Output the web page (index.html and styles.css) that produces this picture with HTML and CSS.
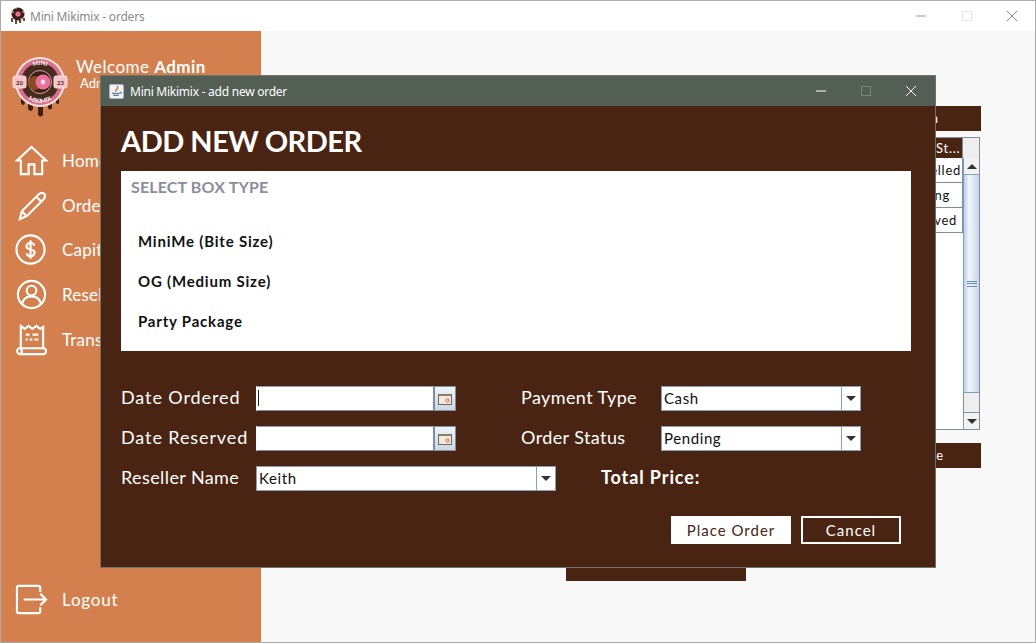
FILE: index.html
```html
<!DOCTYPE html>
<html>
<head>
  <title>Mini Mikimix - orders</title>
  <link rel="stylesheet" href="styles.css">
</head>
<body>
  <div class="window">
    <div class="titlebar">
      <svg class="app-icon" width="16" height="18" viewBox="0 0 16 18">
        <circle cx="8" cy="7" r="6.5" fill="#3f1d12"/>
        <circle cx="8" cy="7" r="2.6" fill="#e4709a"/>
        <path d="M1 5h3M12 5h3M5 1h2M10 12h2" stroke="#f4d6d6"/>
        <path d="M2 11v4M6 12v5M10 12v4M14 11v3" stroke="#3f1d12" stroke-width="1.6"/>
      </svg>
      <span class="title-text">Mini Mikimix - orders</span>
      <div class="win-controls">
        <svg width="12" height="12" viewBox="0 0 12 12"><path d="M1 6h10" stroke="#999"/></svg>
        <svg width="12" height="12" viewBox="0 0 12 12"><rect x="1.5" y="1.5" width="9" height="9" fill="none" stroke="#e6e6e6"/></svg>
        <svg width="12" height="12" viewBox="0 0 12 12"><path d="M1 1l10 10M11 1L1 11" stroke="#888"/></svg>
      </div>
    </div>
    <div class="app">
      <aside class="sidebar">
        <div class="profile">
          <svg class="logo" width="56" height="62" viewBox="0 0 56 62">
            <defs>
              <path id="arc-top" d="M11 27a17 17 0 0 1 34 0"/>
              <path id="arc-bottom" d="M7 27a21 21 0 0 0 42 0"/>
            </defs>
            <path d="M9 38v10q2 4 4 0v-4l3 2v8q3 4 5 0v-6l5 1v11q3 3 5 0V48l5-1v6q2 3 4 0v-7l4-3v5q2 2 3 0V36z" fill="#3f2015"/>
            <circle cx="28" cy="27" r="25" fill="#fbe3dc"/>
            <circle cx="28" cy="27" r="23" fill="#d86f90"/>
            <circle cx="28" cy="27" r="19" fill="#4a2a1e"/>
            <circle cx="28" cy="27" r="11.500" fill="#3a1f15" stroke="#f3cfc6" stroke-width=".8"/>
            <circle cx="23" cy="28" r="7" fill="#8a4a22"/>
            <circle cx="31" cy="27" r="7.500" fill="#ec6f9d"/>
            <circle cx="31" cy="27" r="2.400" fill="#fbe3dc"/>
            <rect x="1" y="21" width="13" height="12" rx="2" fill="#f6c4cc" stroke="#fbe3dc"/>
            <rect x="42" y="21" width="13" height="12" rx="2" fill="#f6c4cc" stroke="#fbe3dc"/>
            <text x="7.500" y="29.500" class="logo-num">20</text>
            <text x="48.500" y="29.500" class="logo-num">23</text>
            <text class="logo-word"><textPath href="#arc-top" startOffset="50%">MINI</textPath></text>
            <text class="logo-word"><textPath href="#arc-bottom" startOffset="50%" side="left">MIKIMIX</textPath></text>
          </svg>
          <div class="welcome">
            <div class="welcome-line">Welcome <b>Admin</b></div>
            <div class="role">Admin</div>
          </div>
        </div>
        <nav class="nav">
          <a class="nav-item">
            <svg class="nav-icon" viewBox="0 0 34 34"><path d="M2 17L17 3l15 14h-4v14h-8V21h-6v10H6V17z"/></svg>
            <span>Home</span>
          </a>
          <a class="nav-item">
            <svg class="nav-icon" viewBox="0 0 34 34"><path d="M5 31l2-8L25 5q3-2 5 0t0 5L12 28zM7 23l5 5M22 8l5 5"/></svg>
            <span>Orders</span>
          </a>
          <a class="nav-item">
            <svg class="nav-icon" viewBox="0 0 34 34"><circle cx="16" cy="17" r="14.500"/><path d="M20 13q-1-3-4-3t-4 3 4 4 4 4-4 3-4-3M16 7.500v19"/></svg>
            <span>Capital</span>
          </a>
          <a class="nav-item">
            <svg class="nav-icon" viewBox="0 0 34 34"><circle cx="17" cy="17" r="14"/><circle cx="17" cy="13" r="5"/><path d="M7 27q2-8 10-8t10 8"/></svg>
            <span>Resellers</span>
          </a>
          <a class="nav-item">
            <svg class="nav-icon" viewBox="0 0 34 34"><path d="M6 26V3l4 3 4-3 4 3 4-3 4 3 3-2v22M6 26H4q-2 2-2 3t2 3h26q2-1 2-3t-2-3H6zM6 26q2 3 0 6M11 12h4M18 12h6M11 17h2M15 17h3M20 17h4"/></svg>
            <span>Transactions</span>
          </a>
        </nav>
        <a class="nav-item logout">
          <svg class="nav-icon" viewBox="0 0 34 34"><path d="M26 9V5q0-2-2-2H4Q2 3 2 5v24q0 2 2 2h20q2 0 2-2v-4M9 17h23M26 11l6 6-6 6"/></svg>
          <span>Logout</span>
        </a>
      </aside>
      <main class="content">
        <h2 class="list-title">CURRENT ORDER LIST</h2>
        <div class="filter-bar">Action</div>
        <div class="table-box">
          <div class="table-rows">
            <div class="th">OrderSt...</div>
            <div class="td">Cancelled</div>
            <div class="td">Pending</div>
            <div class="td">Reserved</div>
          </div>
          <div class="scrollbar">
            <div class="sb-corner"></div>
            <div class="sb-btn"><i class="tri up"></i></div>
            <div class="sb-thumb"><i class="grip"></i></div>
            <div class="sb-track"></div>
            <div class="sb-btn"><i class="tri"></i></div>
          </div>
        </div>
        <div class="action-bar">Update</div>
        <div class="bottom-btn"></div>
      </main>
    </div>
  </div>

  <div class="dialog">
    <div class="dialog-title">
      <svg width="15" height="15" viewBox="0 0 15 15">
        <rect x=".5" y=".5" width="14" height="14" rx="1.500" fill="#eef2f7" stroke="#a9b6c6"/>
        <path d="M8 2q2 2-1 4-1 1 0 2" fill="none" stroke="#d8622a" stroke-width="1.200"/>
        <path d="M3 9q4 1.500 8 0M4 11q3 1 6 0M11 8q2 0 1 2" fill="none" stroke="#47688f"/>
      </svg>
      <span>Mini Mikimix - add new order</span>
      <div class="win-controls dark">
        <svg width="12" height="12" viewBox="0 0 12 12"><path d="M1 6h10" stroke="#fff"/></svg>
        <svg width="12" height="12" viewBox="0 0 12 12"><rect x="1.500" y="1.500" width="9" height="9" fill="none" stroke="#7a847b"/></svg>
        <svg width="12" height="12" viewBox="0 0 12 12"><path d="M1 1l10 10M11 1L1 11" stroke="#fff"/></svg>
      </div>
    </div>
    <div class="dialog-body">
      <h1>ADD NEW ORDER</h1>
      <section class="box-panel">
        <h3>SELECT BOX TYPE</h3>
        <ul class="box-list">
          <li>MiniMe (Bite Size)</li>
          <li>OG (Medium Size)</li>
          <li>Party Package</li>
        </ul>
      </section>
      <div class="form-grid">
        <div class="form-col">
          <div class="field">
            <label class="date-label">Date Ordered</label>
            <div class="input date focused"></div>
            <button class="cal-btn"><svg width="14" height="12" viewBox="0 0 14 12"><rect x=".5" y="1.500" width="13" height="10" fill="#f2ead8" stroke="#6f6a5c"/><rect x="1" y="1" width="12" height="2" fill="#8a7f68"/><circle cx="9.500" cy="7.500" r="1.600" fill="none" stroke="#d9534f"/></svg></button>
          </div>
          <div class="field">
            <label class="date-label">Date Reserved</label>
            <div class="input date"></div>
            <button class="cal-btn"><svg width="14" height="12" viewBox="0 0 14 12"><rect x=".5" y="1.500" width="13" height="10" fill="#f2ead8" stroke="#6f6a5c"/><rect x="1" y="1" width="12" height="2" fill="#8a7f68"/><circle cx="9.500" cy="7.500" r="1.600" fill="none" stroke="#d9534f"/></svg></button>
          </div>
          <div class="field">
            <label>Reseller Name</label>
            <div class="combo wide"><span>Keith</span><i class="arrow"><i class="tri"></i></i></div>
          </div>
        </div>
        <div class="form-col right">
          <div class="field">
            <label>Payment Type</label>
            <div class="combo"><span>Cash</span><i class="arrow"><i class="tri"></i></i></div>
          </div>
          <div class="field">
            <label>Order Status</label>
            <div class="combo"><span>Pending</span><i class="arrow"><i class="tri"></i></i></div>
          </div>
          <div class="field total">Total Price:</div>
        </div>
      </div>
      <div class="dialog-actions">
        <button class="btn primary">Place Order</button>
        <button class="btn">Cancel</button>
      </div>
    </div>
  </div>
</body>
</html>
```

FILE: styles.css
```css
* {
  box-sizing: border-box;
}
html, body {
  margin: 0;
  height: 100%;
  overflow: hidden;
}
body {
  font-family: "Lato", sans-serif;
  position: relative;
  width: 1036px;
  height: 643px;
}
.window {
  width: 1036px;
  height: 643px;
  border: 1px solid #ababab;
  display: flex;
  flex-direction: column;
  background: #fff;
}
.titlebar {
  height: 30px;
  display: flex;
  align-items: center;
  padding-left: 9px;
  background: #fff;
  flex: none;
}
.title-text {
  margin-left: 4px;
  font-family: "Noto Sans", sans-serif;
  font-size: 12px;
  letter-spacing: -.2px;
  color: #8a8a8a;
}
.win-controls {
  margin-left: auto;
  display: flex;
  gap: 33.500px;
  padding-right: 17px;
}
.app {
  flex: 1;
  display: flex;
  min-height: 0;
}

/* sidebar */
.sidebar {
  width: 260px;
  background: #d37f4e;
  color: #fff;
  display: flex;
  flex-direction: column;
  flex: none;
}
.profile {
  display: flex;
  padding: 24px 0 0 11px;
  height: 107px;
}
.logo-num {
  font: 700 6px "Lato", sans-serif;
  text-anchor: middle;
  fill: #5a2a1c;
}
.logo-word {
  font: 700 6px "Lato", sans-serif;
  text-anchor: middle;
  fill: #fff;
}
.welcome {
  margin-left: 8px;
  padding-top: 1px;
}
.welcome-line {
  font-size: 17px;
  line-height: 21px;
  letter-spacing: .45px;
}
.role {
  font-size: 13px;
  line-height: 12px;
  margin-left: 4px;
}
.nav {
  display: flex;
  flex-direction: column;
}
.nav-item {
  display: flex;
  align-items: center;
  height: 44.700px;
  padding-left: 14px;
  font-size: 17px;
  letter-spacing: .2px;
  white-space: nowrap;
}
.nav-icon {
  width: 33px;
  height: 33px;
  fill: none;
  stroke: #fff;
  stroke-width: 2.200;
  margin-right: 14px;
  flex: none;
}
.logout {
  margin-top: auto;
  margin-bottom: 20px;
  letter-spacing: .8px;
}

/* page behind the dialog */
.content {
  flex: 1;
  background: #f8f8f8;
  position: relative;
  padding: 40px 54px 0 45px;
}
.list-title {
  margin: 0;
  font-size: 22px;
  line-height: 26px;
  color: #111;
  letter-spacing: .8px;
}
.filter-bar {
  height: 25px;
  margin-top: 9px;
  padding-right: 43px;
  background: #4a2413;
  color: #fff;
  font-size: 13px;
  line-height: 25px;
  text-align: right;
}
.table-box {
  margin: 6px 1px 0 0;
  height: 293px;
  display: flex;
  justify-content: flex-end;
  background: #fff;
  border: 1px solid #7f8fa1;
  border-left: none;
}
.table-rows {
  width: 66px;
  display: flex;
  flex-direction: column;
  background: #fff;
}
.th {
  height: 20px;
  background: #4a2413;
  color: #fff;
  font-size: 13px;
  line-height: 20px;
  letter-spacing: .7px;
  padding-left: 2px;
  white-space: nowrap;
  overflow: hidden;
  border-right: 1px solid #7f8fa1;
}
.td {
  height: 25px;
  font-size: 13px;
  line-height: 25px;
  letter-spacing: .7px;
  color: #111;
  padding-left: 2px;
  border-right: 1px solid #7f8fa1;
  border-bottom: 1px solid #7f8fa1;
}
.scrollbar {
  width: 16px;
  display: flex;
  flex-direction: column;
  flex: none;
  background: #eee;
}
.sb-corner {
  height: 20px;
  background: #eee;
}
.sb-btn {
  height: 16px;
  background: #f2f2f2;
  border-left: 1px solid #7f9cc4;
  display: flex;
  align-items: center;
  justify-content: center;
}
.sb-thumb {
  flex: 1;
  background: linear-gradient(90deg, #b9cdea 0, #f4f8fc 35%, #c6d6e8 100%);
  border-left: 1px solid #7f9cc4;
  border-top: 1px solid #7f9cc4;
  border-bottom: 1px solid #7f9cc4;
  display: flex;
  align-items: center;
  justify-content: center;
}
.sb-track {
  height: 20px;
  background: #eee;
  border-left: 1px solid #7f8fa1;
  border-bottom: 1px solid #7f8fa1;
}
.grip {
  width: 10px;
  height: 6px;
  border-top: 1px solid #6b8cb8;
  border-bottom: 1px solid #6b8cb8;
  background: linear-gradient(#6b8cb8, #6b8cb8) center / 100% 1px no-repeat;
}
.tri {
  display: block;
  width: 0;
  height: 0;
  border-left: 5px solid transparent;
  border-right: 5px solid transparent;
  border-top: 5px solid #333;
}
.tri.up {
  border-top: none;
  border-bottom: 5px solid #333;
}
.action-bar {
  height: 25px;
  margin-top: 13px;
  padding-right: 38px;
  background: #4a2413;
  color: #fff;
  font-size: 13px;
  line-height: 25px;
  text-align: right;
}
.bottom-btn {
  position: absolute;
  left: 305px;
  top: 510px;
  width: 180px;
  height: 40px;
  background: #4a2413;
}

/* add order dialog */
.dialog {
  position: absolute;
  left: 100px;
  top: 75px;
  width: 836px;
  height: 493px;
  background: #4a2413;
  border: 1px solid #6c746d;
  display: flex;
  flex-direction: column;
}
.dialog-title {
  height: 30px;
  background: #535e54;
  color: #fff;
  display: flex;
  align-items: center;
  padding-left: 8px;
  font-family: "Noto Sans", sans-serif;
  font-size: 12px;
  flex: none;
}
.dialog-title span {
  margin-left: 6px;
  letter-spacing: -.25px;
}
.win-controls.dark {
  gap: 33px;
  padding-right: 18px;
}
.dialog-body {
  flex: 1;
  padding: 16px 34px 0 20px;
  color: #fff;
}
h1 {
  margin: 0;
  font-size: 29px;
  font-weight: 700;
  line-height: 38px;
  letter-spacing: -.5px;
}
.box-panel {
  margin-top: 11px;
  width: 790px;
  height: 180px;
  background: #fff;
  color: #111;
  padding: 6px 10px;
}
h3 {
  margin: 0;
  font-size: 16px;
  line-height: 19px;
  color: #8a8d9c;
  font-weight: 700;
  letter-spacing: .15px;
}
.box-list {
  list-style: none;
  margin: 35px 0 0;
  padding: 0 0 0 7px;
  font-size: 15px;
  font-weight: 700;
  letter-spacing: .8px;
}
.box-list li {
  height: 40px;
  line-height: 20px;
}
.form-grid {
  display: flex;
  margin-top: 35px;
}
.form-col {
  width: 400px;
  display: flex;
  flex-direction: column;
  gap: 15px;
}
.field {
  display: flex;
  align-items: center;
  height: 25px;
}
.field label {
  width: 135px;
  padding-bottom: 3px;
  font-size: 18px;
  letter-spacing: .4px;
  flex: none;
}
.field .date-label {
  letter-spacing: .9px;
}
.right .field label {
  width: 140px;
}
.input {
  width: 178px;
  height: 25px;
  background: #fff;
  border: 1px solid #7f8fa1;
  border-left-color: #fff;
  border-top-color: #8fa0b4;
  flex: none;
}
.input.focused::before {
  content: "";
  display: block;
  width: 1px;
  height: 16px;
  margin: 3px 0 0 1px;
  background: #222;
}
.cal-btn {
  width: 22px;
  height: 25px;
  padding: 0;
  border: 1px solid #7f8fa1;
  background: linear-gradient(#eef3f8, #c9d8e8);
  display: flex;
  align-items: center;
  justify-content: center;
  flex: none;
}
.combo {
  width: 200px;
  height: 25px;
  background: #fff;
  border: 1px solid #8aa0ba;
  display: flex;
  color: #111;
  font-size: 15px;
  line-height: 22px;
  letter-spacing: .6px;
  flex: none;
}
.combo.wide {
  width: 300px;
}
.combo span {
  flex: 1;
  padding-left: 2px;
  border-right: 1px solid #8aa0ba;
}
.arrow {
  width: 18px;
  display: flex;
  align-items: center;
  justify-content: center;
  background: #fff;
}
.total {
  font-size: 18px;
  font-weight: 700;
  letter-spacing: .9px;
  padding: 0 0 3px 80px;
}
.dialog-actions {
  display: flex;
  justify-content: flex-end;
  gap: 10px;
  margin-top: 25px;
}
.btn {
  width: 100px;
  height: 28px;
  background: none;
  border: 2px solid #fff;
  color: #fff;
  font-family: "Lato", sans-serif;
  font-size: 15px;
  letter-spacing: 1px;
  padding: 0;
}
.btn.primary {
  width: 120px;
  background: #fff;
  color: #4a2413;
}
```
